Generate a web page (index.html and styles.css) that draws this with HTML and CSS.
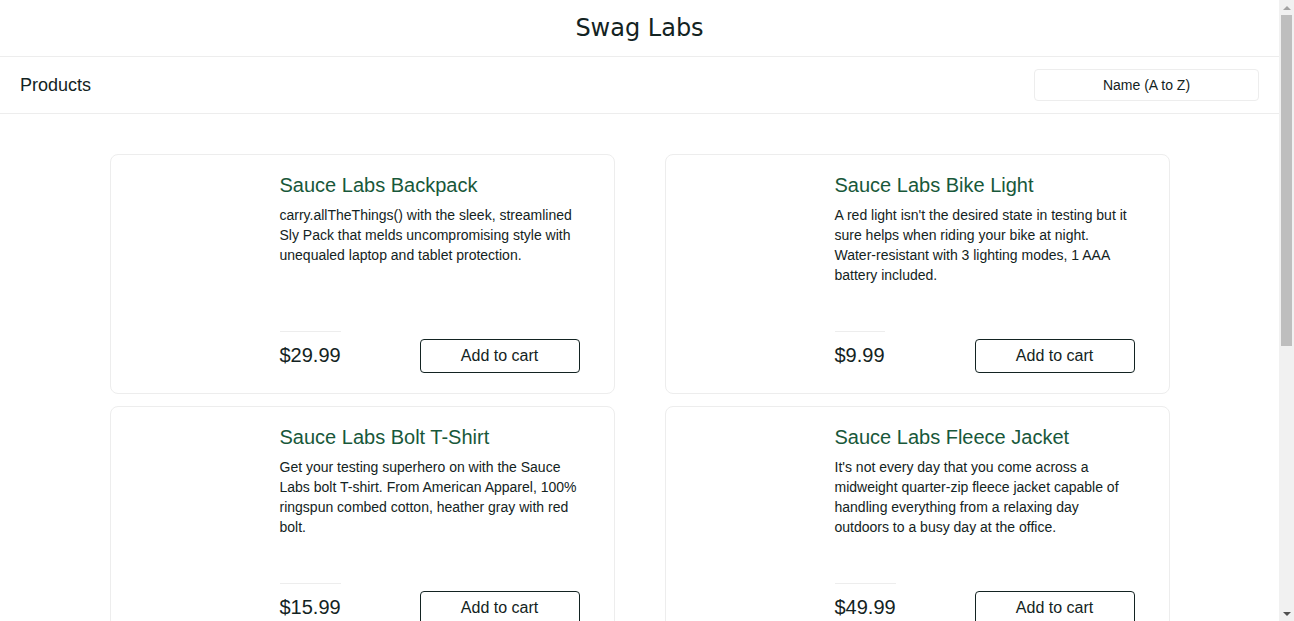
FILE: index.html
```html
<!DOCTYPE html>
<html lang="en">
<head>
<meta charset="utf-8">
<title>Swag Labs</title>
<link rel="stylesheet" href="styles.css">
</head>
<body>
<div class="page">
  <header class="app-header">
    <div class="app-logo">Swag Labs</div>
  </header>
  <div class="sub-header">
    <span class="sub-title">Products</span>
    <div class="sort-box">Name (A to Z)</div>
  </div>
  <main class="content">
    <div class="inventory">
      <div class="item">
        <div class="item-img"></div>
        <div class="item-body">
          <div class="item-info">
            <div class="item-name">Sauce Labs Backpack</div>
            <div class="item-desc">carry.allTheThings() with the sleek, streamlined Sly Pack that melds uncompromising style with unequaled laptop and tablet protection.</div>
          </div>
          <div class="item-bottom">
            <div class="item-price">$29.99</div>
            <button class="btn-cart">Add to cart</button>
          </div>
        </div>
      </div>
      <div class="item">
        <div class="item-img"></div>
        <div class="item-body">
          <div class="item-info">
            <div class="item-name">Sauce Labs Bike Light</div>
            <div class="item-desc">A red light isn't the desired state in testing but it sure helps when riding your bike at night. Water-resistant with 3 lighting modes, 1 AAA battery included.</div>
          </div>
          <div class="item-bottom">
            <div class="item-price">$9.99</div>
            <button class="btn-cart">Add to cart</button>
          </div>
        </div>
      </div>
      <div class="item">
        <div class="item-img"></div>
        <div class="item-body">
          <div class="item-info">
            <div class="item-name">Sauce Labs Bolt T-Shirt</div>
            <div class="item-desc">Get your testing superhero on with the Sauce Labs bolt T-shirt. From American Apparel, 100% ringspun combed cotton, heather gray with red bolt.</div>
          </div>
          <div class="item-bottom">
            <div class="item-price">$15.99</div>
            <button class="btn-cart">Add to cart</button>
          </div>
        </div>
      </div>
      <div class="item">
        <div class="item-img"></div>
        <div class="item-body">
          <div class="item-info">
            <div class="item-name">Sauce Labs Fleece Jacket</div>
            <div class="item-desc">It's not every day that you come across a midweight quarter-zip fleece jacket capable of handling everything from a relaxing day outdoors to a busy day at the office.</div>
          </div>
          <div class="item-bottom">
            <div class="item-price">$49.99</div>
            <button class="btn-cart">Add to cart</button>
          </div>
        </div>
      </div>
      <div class="item">
        <div class="item-img"></div>
        <div class="item-body">
          <div class="item-info">
            <div class="item-name">Sauce Labs Onesie</div>
            <div class="item-desc">Rib snap infant onesie for the junior automation engineer in development. Reinforced 3-snap bottom closure, two-needle hemmed sleeved and bottom won't unravel.</div>
          </div>
          <div class="item-bottom">
            <div class="item-price">$7.99</div>
            <button class="btn-cart">Add to cart</button>
          </div>
        </div>
      </div>
      <div class="item">
        <div class="item-img"></div>
        <div class="item-body">
          <div class="item-info">
            <div class="item-name">Test.allTheThings() T-Shirt (Red)</div>
            <div class="item-desc">This classic Sauce Labs t-shirt is perfect to wear when cozying up to your keyboard to automate a few tests. Super-soft and comfy ringspun combed cotton.</div>
          </div>
          <div class="item-bottom">
            <div class="item-price">$15.99</div>
            <button class="btn-cart">Add to cart</button>
          </div>
        </div>
      </div>
    </div>
  </main>
  <footer class="footer">
    <div class="footer-copy">&copy; 2024 Sauce Labs. All Rights Reserved. Terms of Service | Privacy Policy</div>
  </footer>
</div>
<div class="scrollbar" aria-hidden="true">
  <div class="sb-arrow sb-up"></div>
  <div class="sb-track"><div class="sb-thumb"></div></div>
  <div class="sb-arrow sb-down"></div>
</div>
</body>
</html>
```

FILE: styles.css
```css
* { box-sizing: border-box; }
html, body {
  margin: 0;
  padding: 0;
  background: #ffffff;
  color: #132322;
  font-family: "Liberation Sans", Arial, sans-serif;
}
.page {
  margin-right: 15px;
}
.app-header {
  height: 57px;
  border-bottom: 1px solid #ededed;
  text-align: center;
}
.app-logo {
  font-family: "DejaVu Sans", sans-serif;
  font-size: 24px;
  line-height: 56px;
  color: #132322;
}
.sub-header {
  height: 57px;
  border-bottom: 1px solid #ededed;
  display: flex;
  align-items: center;
  justify-content: space-between;
  padding: 0 20px;
}
.sub-title {
  font-size: 18px;
  line-height: 56px;
}
.sort-box {
  width: 225px;
  height: 32px;
  border: 1px solid #ededed;
  border-radius: 4px;
  font-size: 14px;
  line-height: 30px;
  text-align: center;
}
.content {
  padding: 40px 0 40px;
}
.inventory {
  width: 1060px;
  margin: 0 auto;
  display: grid;
  grid-template-columns: 505px 505px;
  column-gap: 50px;
  row-gap: 12px;
}
.item {
  height: 240px;
  border: 1px solid #ededed;
  border-radius: 8px;
  display: flex;
  padding: 18px 34px 20px 0;
}
.item-img {
  width: 169px;
  flex: none;
}
.item-body {
  flex: 1;
  display: flex;
  flex-direction: column;
  justify-content: space-between;
}
.item-name {
  font-size: 20px;
  line-height: 24px;
  color: #18583a;
}
.item-desc {
  margin-top: 8px;
  padding-right: 2px;
  font-size: 14px;
  line-height: 20px;
}
.item-bottom {
  display: flex;
  justify-content: space-between;
  align-items: flex-end;
}
.item-price {
  font-size: 20px;
  line-height: 24px;
  border-top: 1px solid #ededed;
  padding: 11px 0 6px;
}
.btn-cart {
  width: 160px;
  height: 34px;
  border: 1px solid #132322;
  border-radius: 4px;
  background: #ffffff;
  color: #132322;
  font-family: "Liberation Sans", Arial, sans-serif;
  font-size: 16px;
  padding: 0;
}
.footer {
  border-top: 1px solid #ededed;
  height: 171px;
  padding: 40px 20px;
  text-align: center;
  font-size: 13px;
  color: #484c55;
}
.scrollbar {
  position: fixed;
  top: 0;
  right: 0;
  width: 15px;
  height: 100vh;
  background: #f1f1f1;
  display: flex;
  flex-direction: column;
}
.sb-arrow {
  height: 15px;
  flex: none;
  display: flex;
  align-items: center;
  justify-content: center;
}
.sb-up::before {
  content: "";
  border-left: 4px solid transparent;
  border-right: 4px solid transparent;
  border-bottom: 4px solid #a3a3a3;
}
.sb-down::before {
  content: "";
  border-left: 4px solid transparent;
  border-right: 4px solid transparent;
  border-top: 4px solid #505050;
}
.sb-track {
  flex: 1;
  padding: 0 2px;
}
.sb-thumb {
  height: 331px;
  background: #bebebe;
}
```
